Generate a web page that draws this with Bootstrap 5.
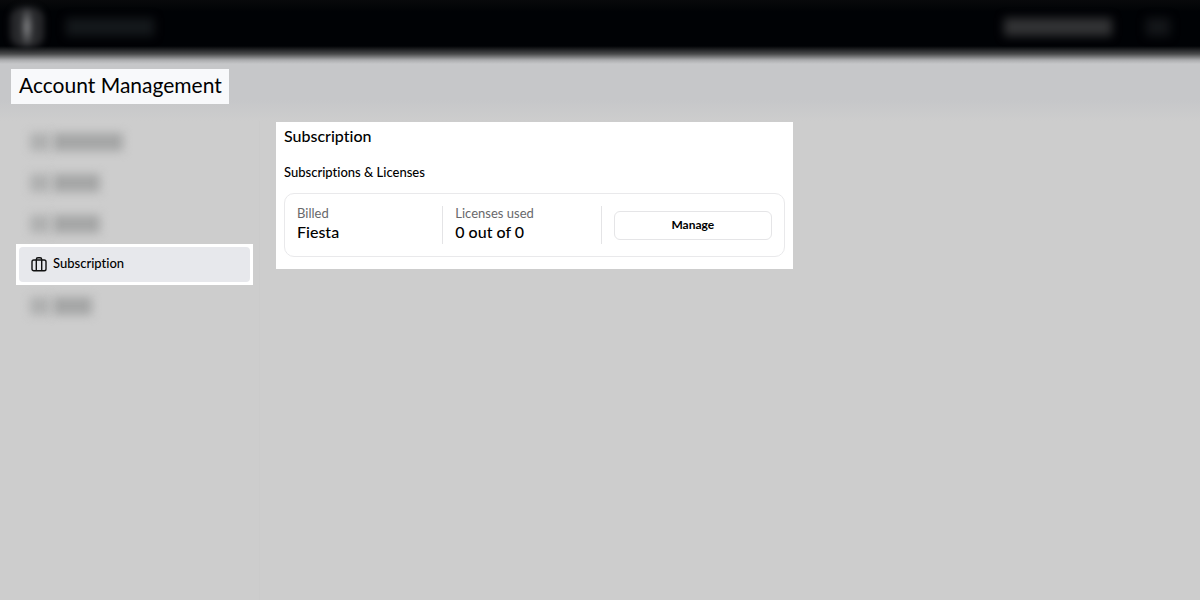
<!DOCTYPE html>
<html lang="en">
<head>
<meta charset="utf-8">
<meta name="viewport" content="width=device-width, initial-scale=1">
<title>Account Management</title>
<link href="https://cdn.jsdelivr.net/npm/bootstrap@5.3.0/dist/css/bootstrap.min.css" rel="stylesheet">
<style>
  body { min-height: 100vh; background: #cdcdcd; color: #000; font-family: Lato, "Liberation Sans", sans-serif; font-variant-ligatures: none; }
  .topbar { height: 64px; padding: 0 30px 10px 10px; background: linear-gradient(#08090b 0, #000205 12px, #000205 46px, #4a4b4c 54px, #a9aaac 60px, #c6c7c9 64px); }
  .titlebar { height: 57px; padding: 5px 11px 0; background: linear-gradient(#c6c7c9 36px, #cdcdcd 57px); }
  .page-title { height: 35px; padding: 0 7px 0 8px; background: #f8f9fb; font-size: 21px; line-height: 32px; font-weight: 400; }
  .smudge { display: block; height: 18px; filter: blur(5px); background: #a5a6a6; }
  .smudge-logo { width: 34px; height: 40px; border-radius: 12px; filter: blur(3px); background: radial-gradient(ellipse 6px 22px, #98999b, transparent), #27282b; }
  .smudge-brand { width: 88px; background: #14181b; margin-left: 22px; }
  .smudge-user { width: 108px; background: #323335; }
  .smudge-menu { width: 24px; background: #131619; margin-left: 34px; }
  .smudge-icon { width: 20px; background: #afb0b0; margin-right: 3px; }
  .w-a { width: 70px; } .w-b { width: 47px; } .w-c { width: 39px; }
  .sidebar { width: 260px; padding: 0 6px 0 16px; border-right: 1px solid #cbcbcb; }
  .side-link { height: 41px; padding: 0 14px; color: #000; font-size: 13px; font-weight: 500; text-decoration: none; }
  .side-link.active { padding: 3px; background: #fff; }
  .side-link.active > span { height: 35px; padding: 0 12px 1px; gap: 6px; background: #e7e8ec; border-radius: 4px; }
  .content { padding: 1px 16px; }
  .panel { max-width: 517px; padding: 3px 8px 12px; background: #fff; }
  .panel h2 { font-size: 16px; line-height: 22px; font-weight: 500; margin-bottom: 15px; }
  .panel h3 { font-size: 13px; line-height: 20px; font-weight: 500; margin-bottom: 11px; }
  .plan { display: grid; grid-template-columns: 145fr 158fr 171fr; padding: 12px; border: 1px solid #e9e9eb; border-radius: 10px; }
  .plan > div { height: 38px; }
  .plan > div + div { border-left: 1px solid #e4e4e6; padding-left: 12px; }
  .plan dt { font-size: 13px; line-height: 14px; font-weight: 400; color: #68686b; }
  .plan dd { font-size: 16px; line-height: 24px; font-weight: 500; margin: 0; }
  .btn-manage { height: 29px; padding: 0; border: 1px solid #e5e5e7; border-radius: 6px; background: #fff; color: #000; font-size: 12px; line-height: 24px; font-weight: 700; }
</style>
<script src="https://cdn.jsdelivr.net/npm/bootstrap@5.3.0/dist/js/bootstrap.bundle.min.js" defer></script>
</head>
<body class="d-flex flex-column">
<header class="topbar d-flex align-items-center" aria-hidden="true">
  <span class="smudge smudge-logo"></span>
  <span class="smudge smudge-brand"></span>
  <span class="smudge smudge-user ms-auto"></span>
  <span class="smudge smudge-menu"></span>
</header>
<div class="titlebar d-flex align-items-start"><h1 class="page-title m-0">Account Management</h1></div>
<div class="d-flex align-items-stretch flex-grow-1">
  <nav class="sidebar flex-shrink-0" aria-label="Account">
    <div class="side-link d-flex align-items-center" aria-hidden="true"><span class="smudge smudge-icon"></span><span class="smudge w-a"></span></div>
    <div class="side-link d-flex align-items-center" aria-hidden="true"><span class="smudge smudge-icon"></span><span class="smudge w-b"></span></div>
    <div class="side-link d-flex align-items-center" aria-hidden="true"><span class="smudge smudge-icon"></span><span class="smudge w-b"></span></div>
    <a href="#subscription" class="side-link active d-block" aria-current="page"><span class="d-flex align-items-center">
      <svg width="16" height="16" viewBox="0 0 16 16" fill="none" stroke="#111" stroke-width="1.4" aria-hidden="true"><rect x="1" y="4" width="14" height="10.8" rx="1.8"/><path d="M5.3 14.8V3.4Q5.3 1.7 7 1.7H9Q10.7 1.7 10.7 3.4V14.8"/></svg>
      Subscription</span></a>
    <div class="side-link d-flex align-items-center" aria-hidden="true"><span class="smudge smudge-icon"></span><span class="smudge w-c"></span></div>
  </nav>
  <main class="content flex-grow-1" id="subscription">
    <section class="panel">
      <h2>Subscription</h2>
      <h3>Subscriptions &amp; Licenses</h3>
      <dl class="plan m-0">
        <div><dt>Billed</dt><dd>Fiesta</dd></div>
        <div><dt>Licenses used</dt><dd>0 out of 0</dd></div>
        <div class="d-flex align-items-center"><button type="button" class="btn btn-manage w-100">Manage</button></div>
      </dl>
    </section>
  </main>
</div>
</body>
</html>
